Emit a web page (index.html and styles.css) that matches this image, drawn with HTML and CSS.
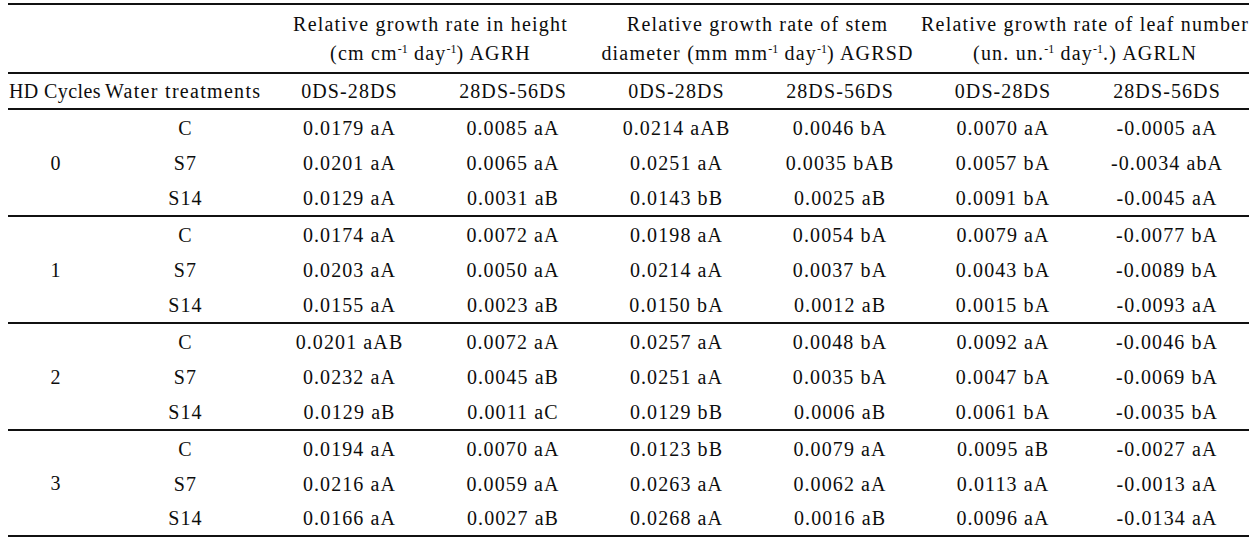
FILE: index.html
```html
<!DOCTYPE html>
<html lang="en">
<head>
<meta charset="utf-8">
<title>Relative growth rates</title>
<link rel="stylesheet" href="styles.css">
</head>
<body>
<table class="data">
  <colgroup>
    <col class="w96"><col class="w163">
    <col class="w165"><col class="w162"><col class="w165"><col class="w162"><col class="w164"><col class="w164">
  </colgroup>
  <thead>
    <tr class="h1">
      <th></th><th></th>
      <th colspan="2">Relative growth rate in height<br>(cm cm<sup>-1</sup> day<sup>-1</sup>) AGRH</th>
      <th colspan="2">Relative growth rate of stem<br>diameter (mm mm<sup>-1</sup> day<sup>-1</sup>) AGRSD</th>
      <th colspan="2">Relative growth rate of leaf number<br>(un. un.<sup>-1</sup> day<sup>-1</sup>.) AGRLN</th>
    </tr>
    <tr class="h2">
      <th class="left l1">HD Cycles</th><th class="left l2">Water treatments</th>
      <th>0DS-28DS</th><th>28DS-56DS</th><th>0DS-28DS</th><th>28DS-56DS</th><th>0DS-28DS</th><th>28DS-56DS</th>
    </tr>
  </thead>
  <tbody>
    <tr><td class="cyc" rowspan="3">0</td><td>C</td><td>0.0179 aA</td><td>0.0085 aA</td><td>0.0214 aAB</td><td>0.0046 bA</td><td>0.0070 aA</td><td>-0.0005 aA</td></tr>
    <tr><td>S7</td><td>0.0201 aA</td><td>0.0065 aA</td><td>0.0251 aA</td><td>0.0035 bAB</td><td>0.0057 bA</td><td>-0.0034 abA</td></tr>
    <tr class="last"><td>S14</td><td>0.0129 aA</td><td>0.0031 aB</td><td>0.0143 bB</td><td>0.0025 aB</td><td>0.0091 bA</td><td>-0.0045 aA</td></tr>
  </tbody>
  <tbody>
    <tr><td class="cyc" rowspan="3">1</td><td>C</td><td>0.0174 aA</td><td>0.0072 aA</td><td>0.0198 aA</td><td>0.0054 bA</td><td>0.0079 aA</td><td>-0.0077 bA</td></tr>
    <tr><td>S7</td><td>0.0203 aA</td><td>0.0050 aA</td><td>0.0214 aA</td><td>0.0037 bA</td><td>0.0043 bA</td><td>-0.0089 bA</td></tr>
    <tr class="last"><td>S14</td><td>0.0155 aA</td><td>0.0023 aB</td><td>0.0150 bA</td><td>0.0012 aB</td><td>0.0015 bA</td><td>-0.0093 aA</td></tr>
  </tbody>
  <tbody>
    <tr><td class="cyc" rowspan="3">2</td><td>C</td><td>0.0201 aAB</td><td>0.0072 aA</td><td>0.0257 aA</td><td>0.0048 bA</td><td>0.0092 aA</td><td>-0.0046 bA</td></tr>
    <tr><td>S7</td><td>0.0232 aA</td><td>0.0045 aB</td><td>0.0251 aA</td><td>0.0035 bA</td><td>0.0047 bA</td><td>-0.0069 bA</td></tr>
    <tr class="last"><td>S14</td><td>0.0129 aB</td><td>0.0011 aC</td><td>0.0129 bB</td><td>0.0006 aB</td><td>0.0061 bA</td><td>-0.0035 bA</td></tr>
  </tbody>
  <tbody class="final">
    <tr><td class="cyc" rowspan="3">3</td><td>C</td><td>0.0194 aA</td><td>0.0070 aA</td><td>0.0123 bB</td><td>0.0079 aA</td><td>0.0095 aB</td><td>-0.0027 aA</td></tr>
    <tr><td>S7</td><td>0.0216 aA</td><td>0.0059 aA</td><td>0.0263 aA</td><td>0.0062 aA</td><td>0.0113 aA</td><td>-0.0013 aA</td></tr>
    <tr class="last"><td>S14</td><td>0.0166 aA</td><td>0.0027 aB</td><td>0.0268 aA</td><td>0.0016 aB</td><td>0.0096 aA</td><td>-0.0134 aA</td></tr>
  </tbody>
</table>
</body>
</html>
```

FILE: styles.css
```css
html, body {
  background: #ffffff;
}
body {
  margin: 3px 8px 0 8px;
  font-family: "Liberation Serif", "Times New Roman", serif;
  font-size: 20px;
  letter-spacing: 1.1px;
  color: #0d0d0d;
}
.data {
  border-collapse: separate;
  border-spacing: 0;
  width: 1241px;
  table-layout: fixed;
}
.w96 { width: 96px; }
.w163 { width: 163px; }
.w165 { width: 165px; }
.w162 { width: 162px; }
.w164 { width: 164px; }
.data th, .data td {
  padding: 0;
  font-weight: normal;
  text-align: center;
  vertical-align: middle;
  white-space: nowrap;
  box-sizing: content-box;
}
.data th.left {
  text-align: left;
}
.data th.l1 { padding-left: 1px; letter-spacing: 0.4px; }
.data th.l2 { padding-left: 1px; letter-spacing: 1.3px; }
.h1 th {
  border-top: 2px solid #111111;
  border-bottom: 2px solid #111111;
  height: 67px;
  line-height: 29px;
  letter-spacing: 1.2px;
}
.h2 th {
  height: 33px;
  padding-top: 1px;
  line-height: 33px;
  border-bottom: 2px solid #111111;
}
.data .h2 th.left {
  padding-top: 1px;
}
sup {
  font-size: 12px;
  letter-spacing: 0;
  line-height: 0;
  vertical-align: 7px;
}
.data td {
  height: 34px;
  padding-top: 1px;
  line-height: 34px;
}
.data td.cyc {
  padding-top: 0;
}
.data tr.last td,
.data td.cyc {
  border-bottom: 2px solid #111111;
}
.data tbody.final tr:last-child td {
  height: 33px;
  line-height: 33px;
}
```
